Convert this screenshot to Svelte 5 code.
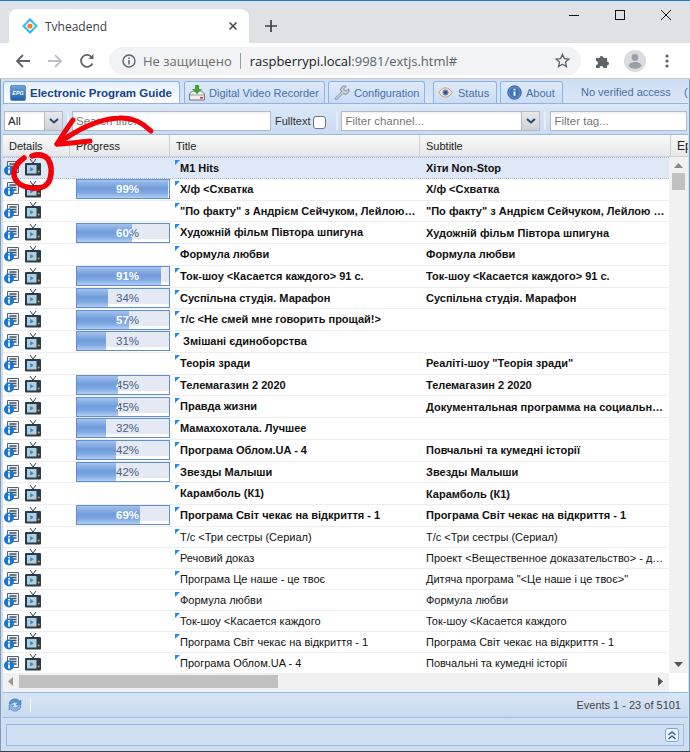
<script>
  const rows = [
    { title: "M1 Hits", sub: "Хіти Non-Stop", bold: true, sel: true },
    { title: "Х/ф <Схватка", sub: "Х/ф <Схватка", pct: 99, bold: true },
    { title: '"По факту" з Андрієм Сейчуком, Лейлою…', sub: '"По факту" з Андрієм Сейчуком, Лейлою …', bold: true },
    { title: "Художній фільм Півтора шпигуна", sub: "Художній фільм Півтора шпигуна", pct: 60, bold: true },
    { title: "Формула любви", sub: "Формула любви", bold: true },
    { title: "Ток-шоу <Касается каждого> 91 с.", sub: "Ток-шоу <Касается каждого> 91 с.", pct: 91, bold: true },
    { title: "Суспільна студія. Марафон", sub: "Суспільна студія. Марафон", pct: 34, bold: true },
    { title: "т/с <Не смей мне говорить прощай!>", sub: "", pct: 57, bold: true },
    { title: " Змішані єдиноборства", sub: "", pct: 31, bold: true },
    { title: "Теорія зради", sub: 'Реаліті-шоу "Теорія зради"', bold: true },
    { title: "Телемагазин 2 2020", sub: "Телемагазин 2 2020", pct: 45, bold: true },
    { title: "Правда жизни", sub: "Документальная программа на социальн…", pct: 45, bold: true },
    { title: "Мамахохотала. Лучшее", sub: "", pct: 32, bold: true },
    { title: "Програма Облом.UA - 4", sub: "Повчальні та кумедні історії", pct: 42, bold: true },
    { title: "Звезды Малыши", sub: "Звезды Малыши", pct: 42, bold: true },
    { title: "Карамболь (К1)", sub: "Карамболь (К1)", bold: true },
    { title: "Програма Світ чекає на відкриття - 1", sub: "Програма Світ чекає на відкриття - 1", pct: 69, bold: true },
    { title: "Т/с <Три сестры (Сериал)", sub: "Т/с <Три сестры (Сериал)" },
    { title: "Речовий доказ", sub: "Проект <Вещественное доказательство> - д…" },
    { title: "Програма Це наше - це твоє", sub: 'Дитяча програма "<Це наше і це твоє>"' },
    { title: "Формула любви", sub: "Формула любви" },
    { title: "Ток-шоу <Касается каждого", sub: "Ток-шоу <Касается каждого" },
    { title: "Програма Світ чекає на відкриття - 1", sub: "Програма Світ чекає на відкриття - 1" },
    { title: "Програма Облом.UA - 4", sub: "Повчальні та кумедні історії" },
  ];
</script>

<div class="window">
  <div class="tabstrip">
    <div class="tab">
      <svg class="favicon" width="18" height="18" viewBox="0 0 18 18">
        <path d="M9 1l4 4-1.500 1.500L9 4 6.500 6.500 5 5z" fill="#29b6f6" />
        <path d="M9 17l4-4-1.500-1.500L9 14l-2.500-2.500L5 13z" fill="#29b6f6" />
        <path d="M1 9l4-4 1.500 1.500L4 9l2.500 2.500L5 13z" fill="#29c5f6" />
        <path d="M17 9l-4-4-1.500 1.500L14 9l-2.500 2.500L13 13z" fill="#29c5f6" />
        <circle cx="9" cy="9" r="2.600" fill="#ff7a1a" />
      </svg>
      <span class="tab-title">Tvheadend</span>
      <svg width="10" height="10" viewBox="0 0 10 10"><path d="M1.500 1.500l7 7M8.500 1.500l-7 7" stroke="#45494d" stroke-width="1.600" /></svg>
    </div>
    <svg class="plus" width="12" height="12" viewBox="0 0 12 12"><path d="M6 0v12M0 6h12" stroke="#3c4043" stroke-width="1.700" /></svg>
    <div class="winctl">
      <svg width="12" height="12" viewBox="0 0 12 12"><path d="M1 6.500h10" stroke="#111" /></svg>
      <svg width="12" height="12" viewBox="0 0 12 12"><rect x="1.500" y="1.500" width="9" height="9" fill="none" stroke="#111" /></svg>
      <svg width="12" height="12" viewBox="0 0 12 12"><path d="M1 1l10 10M11 1L1 11" stroke="#111" /></svg>
    </div>
  </div>

  <div class="toolbar">
    <svg class="nav" width="16" height="16" viewBox="0 0 16 16"><path d="M15 8H2M8 2L2 8l6 6" fill="none" stroke="#5f6368" stroke-width="1.800" /></svg>
    <svg class="nav" width="16" height="16" viewBox="0 0 16 16"><path d="M1 8h13M8 2l6 6-6 6" fill="none" stroke="#bdc1c6" stroke-width="1.800" /></svg>
    <svg class="nav" width="16" height="16" viewBox="0 0 16 16"><path d="M13.500 10.500A6 6 0 1 1 13 4.500" fill="none" stroke="#5f6368" stroke-width="1.800" /><path d="M14.500 1v5h-5z" fill="#5f6368" /></svg>
    <div class="omnibox">
      <svg width="14" height="14" viewBox="0 0 14 14"><circle cx="7" cy="7" r="6" fill="none" stroke="#5f6368" stroke-width="1.400" /><path d="M7 6v4.500M7 3.500v1.400" stroke="#5f6368" stroke-width="1.500" /></svg>
      <span class="insecure">Не защищено</span>
      <span class="bar"></span>
      <span class="url">raspberrypi.local<span class="dim">:9981/extjs.html#</span></span>
      <svg class="star" width="15" height="15" viewBox="0 0 16 16"><path d="M8 1.500l2 4.500 4.800.5-3.600 3.200 1 4.800L8 12l-4.200 2.500 1-4.800L1.200 6.500 6 6z" fill="none" stroke="#5f6368" stroke-width="1.400" /></svg>
    </div>
    <svg class="puzzle" width="16" height="16" viewBox="0 0 16 16"><path d="M1 5h3.500a2 2 0 1 1 4 0H12v3.500a2 2 0 1 1 0 4V15H8.500a2 2 0 1 0-4 0H1v-3a2 2 0 1 0 0-4z" fill="#5f6368" /></svg>
    <svg class="avatar" width="22" height="22" viewBox="0 0 22 22"><circle cx="11" cy="11" r="11" fill="#dadce0" /><circle cx="11" cy="7.500" r="3.400" fill="#9aa0a6" /><path d="M4.500 16c1-3.200 3.500-4 6.500-4s5.500.8 6.500 4c-1.500 1.800-4 2.800-6.500 2.800S6 17.800 4.500 16z" fill="#9aa0a6" /></svg>
    <svg class="dots" width="4" height="14" viewBox="0 0 4 14"><circle cx="2" cy="2" r="1.600" fill="#5f6368" /><circle cx="2" cy="7" r="1.600" fill="#5f6368" /><circle cx="2" cy="12" r="1.600" fill="#5f6368" /></svg>
  </div>

  <div class="app">
    <div class="ext-tabs">
      <div class="ext-tab active epg">
        <svg width="16" height="16" viewBox="0 0 18 18"><defs><linearGradient id="e" x1="0" y1="0" x2="0" y2="1"><stop offset="0" stop-color="#6fa5dc" /><stop offset="1" stop-color="#1d5ea5" /></linearGradient></defs><rect x=".5" y=".5" width="17" height="17" rx="2" fill="url(#e)" stroke="#4f86c0" /><text x="9" y="11.500" text-anchor="middle" font-size="6" font-weight="700" font-style="italic" fill="#fff" font-family="Liberation Sans">EPG</text></svg>
        <span>Electronic Program Guide</span>
      </div>
      <div class="ext-tab dvr">
        <svg width="18" height="18" viewBox="0 0 18 18"><path d="M1.500 10l3-3h9l3 3v6h-15z" fill="#eee" stroke="#777" /><path d="M1.500 11h15" stroke="#999" /><rect x="12" y="13" width="3" height="1.500" fill="#e22" /><path d="M7 1h4v4h3l-5 5-5-5h3z" fill="#3fa535" /></svg>
        <span>Digital Video Recorder</span>
      </div>
      <div class="ext-tab conf">
        <svg width="17" height="17" viewBox="0 0 18 18"><path d="M2 15.500L9 8.500a4 4 0 0 1 5-6l-2.500 2.500.5 2 2 .5L16.500 5a4 4 0 0 1-6 5l-7 7z" fill="#c9d3de" stroke="#7f8a96" /></svg>
        <span>Configuration</span>
      </div>
      <div class="ext-tab stat">
        <svg width="15" height="13" viewBox="0 0 18 14"><path d="M1 7c2.500-4 5-5.500 8-5.500S14.500 3 17 7c-2.500 4-5 5.500-8 5.500S3.500 11 1 7z" fill="#f4e4d4" stroke="#c98a5a" /><circle cx="9" cy="7" r="3.600" fill="#4f86c8" /><circle cx="9" cy="7" r="1.500" fill="#17365f" /></svg>
        <span>Status</span>
      </div>
      <div class="ext-tab about">
        <svg width="15" height="15" viewBox="0 0 16 16"><circle cx="8" cy="8" r="7.200" fill="#5b8ac8" stroke="#2f5f9f" /><circle cx="8" cy="8" r="5.200" fill="#3f74b8" /><path d="M8 7v4.500M8 4v1.600" stroke="#fff" stroke-width="2" /></svg>
        <span>About</span>
      </div>
      <span class="access">No verified access</span>
      <span class="paren">(</span>
    </div>

    <div class="filters">
      <div class="combo all"><span class="val">All</span><span class="trigger"><svg width="10" height="6" viewBox="0 0 10 6"><path d="M1 1l4 3.500L9 1" fill="none" stroke="#26477a" stroke-width="2" /></svg></span></div>
      <span class="sep"></span>
      <div class="field search">Search title...</div>
      <span class="lbl">Fulltext</span>
      <span class="check"></span>
      <span class="sep"></span>
      <div class="combo channel"><span class="val">Filter channel...</span><span class="trigger"><svg width="10" height="6" viewBox="0 0 10 6"><path d="M1 1l4 3.500L9 1" fill="none" stroke="#26477a" stroke-width="2" /></svg></span></div>
      <span class="sep"></span>
      <div class="field tag">Filter tag...</div>
    </div>

    <div class="grid">
      <div class="head">
        <div class="hcell c-details">Details</div>
        <div class="hcell c-progress">Progress</div>
        <div class="hcell c-title">Title</div>
        <div class="hcell c-sub">Subtitle</div>
        <div class="hcell c-ep">Ep</div>
      </div>
      <div class="middle">
        <div class="body">
          {#each rows as r}
            <div class="row" class:bold={r.bold} class:sel={r.sel}>
              <div class="cell c-details icons">
                <svg width="15" height="16" viewBox="0 0 15 16">
                  <path d="M3.500 1.500h11v11h-11z" fill="#eef1f4" stroke="#56626e" />
                  <path d="M5.500 4h7M5.500 6.500h7M9 9h3.500" stroke="#46525f" stroke-width="1.300" />
                  <circle cx="5" cy="10.500" r="5" fill="#1b76d2" />
                  <path d="M5 9.500v4M5 7v1.400" stroke="#fff" stroke-width="1.800" />
                </svg>
                <svg width="16" height="17" viewBox="0 0 16 17">
                  <path d="M5 0l3 4 3-4" fill="none" stroke="#33424f" />
                  <rect x="0" y="4" width="16" height="12.500" rx="1" fill="#2a3c49" />
                  <rect x="2" y="6" width="9.500" height="8.500" fill="#b5cddd" />
                  <path d="M5.200 8l3.600 2.200-3.600 2.200z" fill="#2490d8" />
                  <circle cx="13.700" cy="12.500" r="1" fill="#e8a020" />
                </svg>
              </div>
              <div class="cell c-progress">
                {#if r.pct}
                  <div class="pbar">
                    <span class="ptext back">{r.pct}%</span>
                    <div class="pfill" style="width: {r.pct}%"><span class="ptext front">{r.pct}%</span></div>
                  </div>
                {/if}
              </div>
              <div class="cell c-title dirty">{r.title}</div>
              <div class="cell c-sub">{r.sub}</div>
            </div>
          {/each}
        </div>
        <div class="vscroll">
          <svg width="9" height="5" viewBox="0 0 9 5"><path d="M4.500 0L9 5H0z" fill="#888" /></svg>
          <span class="vthumb"></span>
          <svg class="vdown" width="9" height="5" viewBox="0 0 9 5"><path d="M4.500 5L9 0H0z" fill="#555" /></svg>
        </div>
      </div>
      <div class="hscroll">
        <svg width="5" height="9" viewBox="0 0 5 9"><path d="M0 4.500L5 0v9z" fill="#999" /></svg>
        <span class="hthumb"></span>
        <svg class="hright" width="5" height="9" viewBox="0 0 5 9"><path d="M5 4.500L0 0v9z" fill="#555" /></svg>
      </div>
    </div>

    <div class="paging">
      <svg width="16" height="16" viewBox="0 0 16 16"><path d="M2 7a6 6 0 0 1 10.500-3l1.500-1v5h-5l1.700-1.500A3.800 3.800 0 0 0 4.500 7z" fill="#5c94d6" stroke="#2f6db5" stroke-width=".5" /><path d="M14 9a6 6 0 0 1-10.500 3L2 13V8h5l-1.700 1.500A3.800 3.800 0 0 0 11.500 9z" fill="#8ab8ea" stroke="#2f6db5" stroke-width=".5" /></svg>
      <span class="psep"></span>
      <span class="events">Events 1 - 23 of 5101</span>
    </div>
    <div class="collapsed">
      <span class="tool"><svg width="10" height="10" viewBox="0 0 10 10"><path d="M1.500 5l3.500-3 3.500 3M1.500 9l3.500-3 3.500 3" fill="none" stroke="#2d5f9e" stroke-width="1.500" /></svg></span>
    </div>
  </div>

  <svg class="scribble" width="690" height="752" viewBox="0 0 690 752">
    <g fill="none" stroke="#f40009" stroke-linecap="round" stroke-linejoin="round">
      <path d="M151 130c-8-8-18-14-32-13-22 1-42 12-62 26" stroke-width="5" />
      <path d="M73 119c-6 8-11 16-16 24 10 0 22-2 33-3" stroke-width="5" />
      <path d="M24 157c-6 4-10 10-10 16 0 8 8 13 18 14 9 1 16-2 18-9 2-7 1-15-2-20-4-4-10-5-16-3" stroke-width="5.500" />
    </g>
  </svg>
</div>

<style>
  :global(body) {
    margin: 0;
    background: #fff;
  }

  .window {
    position: relative;
    width: 690px;
    height: 752px;
    display: flex;
    flex-direction: column;
    overflow: hidden;
    box-sizing: border-box;
    border-top: 1px solid #1a7fd0;
    border-bottom: 1px solid #33424f;
    font-family: "Liberation Sans", Arial, sans-serif;
    background: #cfdef1;
  }

  .tabstrip {
    height: 42px;
    flex: none;
    background: #dee1e6;
    display: flex;
    align-items: flex-end;
    padding-left: 9px;
    box-sizing: border-box;
    position: relative;
  }

  .tab {
    width: 240px;
    height: 34px;
    box-sizing: border-box;
    background: #fff;
    border-radius: 8px 8px 0 0;
    display: flex;
    align-items: center;
    padding: 0 11px 0 12px;
    font-family: "Open Sans", "Noto Sans", sans-serif;
    font-size: 12px;
    color: #3c4043;
  }

  .favicon {
    margin-right: 6px;
  }

  .tab-title {
    flex: 1;
  }

  .plus {
    margin: 0 0 11px 16px;
  }

  .winctl {
    margin: 0 0 22px auto;
    display: flex;
    gap: 34px;
    padding-right: 18px;
  }

  .toolbar {
    height: 36px;
    flex: none;
    background: #fff;
    display: flex;
    align-items: center;
    box-sizing: border-box;
    border-bottom: 1px solid #c6c8cb;
    padding-left: 15px;
  }

  .nav {
    margin-right: 16px;
  }

  .omnibox {
    width: 472px;
    height: 28px;
    margin-left: -2px;
    border-radius: 14px;
    background: #f1f3f4;
    display: flex;
    align-items: center;
    padding: 0 11px 0 13px;
    box-sizing: border-box;
    font-family: "Open Sans", "Noto Sans", sans-serif;
    font-size: 13px;
  }

  .insecure {
    color: #6f6a66;
    margin-left: 7px;
  }

  .bar {
    width: 1px;
    height: 16px;
    background: #9a9da0;
    margin: 0 9px 0 8px;
  }

  .url {
    color: #202124;
  }

  .dim {
    color: #5f6368;
  }

  .star {
    margin-left: auto;
  }

  .puzzle {
    margin-left: 14px;
  }

  .avatar {
    margin-left: 13px;
  }

  .dots {
    margin-left: 19px;
  }

  .app {
    flex: 1;
    min-height: 0;
    display: flex;
    flex-direction: column;
    border-left: 1px solid #7f9db9;
    border-right: 1px solid #7f9db9;
    padding: 2px 1px 0 2px;
    background: #cfdef1;
    overflow: hidden;
  }

  .ext-tabs {
    height: 23px;
    flex: none;
    display: flex;
    align-items: flex-end;
    gap: 3px;
    box-sizing: border-box;
    border-bottom: 1px solid #8db2e3;
    background: linear-gradient(#cfdff5, #dbe6f6);
    font-size: 11px;
    color: #456fa8;
    white-space: nowrap;
    overflow: hidden;
  }

  .ext-tab {
    height: 22px;
    box-sizing: border-box;
    flex: none;
    display: flex;
    align-items: center;
    gap: 4px;
    padding: 0 0 0 4px;
    border: 1px solid #8db2e3;
    border-bottom: none;
    border-radius: 3px 3px 0 0;
    background: linear-gradient(#dfeafa, #cbdcf4);
  }

  .ext-tab svg {
    flex: none;
  }

  .ext-tab.active {
    background: linear-gradient(#e6f0fc, #fff);
    font-weight: 700;
    font-size: 11.500px;
    color: #15428b;
    height: 23px;
    margin-bottom: -1px;
  }

  .epg {
    width: 177px;
    padding-left: 6px;
  }

  .dvr {
    width: 141px;
    margin-left: 1px;
    padding-left: 3px;
    gap: 3px;
  }

  .conf {
    width: 97px;
  }

  .stat {
    width: 64px;
    margin-left: 5px;
    gap: 5px;
  }

  .about {
    width: 63px;
    padding-left: 6px;
  }

  .access {
    margin-left: 15px;
    line-height: 22px;
  }

  .paren {
    margin-left: 10px;
    line-height: 22px;
  }

  .filters {
    height: 31px;
    flex: none;
    box-sizing: border-box;
    display: flex;
    align-items: center;
    padding: 3px 0 0 1px;
    background: linear-gradient(#dbe7f7, #cadcf2);
    border-bottom: 1px solid #99bbe8;
    font-size: 11.500px;
    color: #333;
    white-space: nowrap;
  }

  .field,
  .combo {
    height: 20px;
    box-sizing: border-box;
    background: linear-gradient(#eee 0, #fff 3px);
    border: 1px solid #b5b8c8;
    display: flex;
    align-items: center;
    flex: none;
  }

  .field {
    padding-left: 3px;
    color: #777;
  }

  .val {
    flex: 1;
    padding-left: 3px;
    color: #777;
  }

  .all .val {
    color: #222;
  }

  .trigger {
    width: 17px;
    height: 18px;
    display: flex;
    align-items: center;
    justify-content: center;
    background: linear-gradient(#e8e9ea, #cfd1d3);
    border-left: 1px solid #b5b8c8;
  }

  .all {
    width: 59px;
  }

  .search {
    width: 199px;
    margin-left: -1px;
  }

  .channel {
    width: 199px;
    margin-left: -1px;
  }

  .tag {
    width: 137px;
  }

  .sep {
    width: 2px;
    height: 18px;
    background: #e4edf9;
    margin: 0 4px;
    flex: none;
  }

  .lbl {
    margin-left: 4px;
    font-size: 11px;
  }

  .check {
    width: 11px;
    height: 11px;
    margin: 3px 6px 0 3px;
    border: 1px solid #777;
    border-radius: 3px;
    background: #fff;
    flex: none;
  }

  .grid {
    flex: 1;
    min-height: 0;
    display: flex;
    flex-direction: column;
    background: #fff;
    overflow: hidden;
  }

  .head {
    height: 22px;
    flex: none;
    display: flex;
    box-sizing: border-box;
    background: linear-gradient(#fafafa, #e6e7e9);
    border-bottom: 1px solid #d0d0d0;
    font-size: 11px;
    color: #222;
  }

  .hcell {
    box-sizing: border-box;
    line-height: 22px;
    padding-left: 6px;
    border-right: 1px solid #d0d0d0;
    flex: none;
  }

  .c-details {
    width: 67px;
  }

  .c-progress {
    width: 100px;
  }

  .c-title {
    width: 250px;
  }

  .c-sub {
    width: 251px;
  }

  .c-ep {
    flex: 1;
    border-right: none;
    font-size: 12px;
  }

  .middle {
    flex: 1;
    min-height: 0;
    display: flex;
    overflow: hidden;
  }

  .body {
    flex: 1;
    min-width: 0;
    overflow: hidden;
  }

  .row {
    height: 21px;
    box-sizing: border-box;
    display: flex;
    align-items: center;
    border-bottom: 1px solid #ededed;
    color: #111;
    white-space: pre;
  }

  .row.bold {
    height: 21.750px;
    font-weight: 700;
  }

  .row.sel {
    background: #dfe8f6;
    border-top: 1px dotted #a3bae9;
    border-bottom: 1px dotted #a3bae9;
  }

  .cell {
    box-sizing: border-box;
    flex: none;
    overflow: hidden;
    padding-left: 6px;
    font-size: 11px;
  }

  .icons {
    display: flex;
    align-items: center;
    gap: 6px;
    padding-left: 1px;
  }

  .icons svg {
    flex: none;
  }

  .dirty {
    position: relative;
    padding-left: 10px;
    height: 100%;
    line-height: 20px;
  }

  .dirty::before {
    content: "";
    position: absolute;
    left: 5px;
    top: 2px;
    border-top: 5px solid #1a8cff;
    border-right: 5px solid transparent;
  }

  .pbar {
    position: relative;
    width: 94px;
    height: 20px;
    box-sizing: border-box;
    border: 1px solid #5f8fd3;
    background: linear-gradient(#e4e9f3 85%, #fff 85%);
    overflow: hidden;
    text-align: center;
  }

  .pfill {
    position: absolute;
    left: 0;
    top: 0;
    bottom: 0;
    overflow: hidden;
    background: linear-gradient(#a4c2ec, #6f9cdc 45%, #7ea8e2 70%, #b4cdf0);
  }

  .ptext {
    position: absolute;
    left: 0;
    top: 0;
    width: 92px;
    box-sizing: border-box;
    padding-left: 9px;
    line-height: 18px;
    font-size: 11.500px;
    font-weight: 400;
  }

  .back {
    color: #4a5f88;
  }

  .front {
    color: #fff;
    font-weight: 700;
  }

  .vscroll {
    width: 19px;
    flex: none;
    background: #f1f1f1;
    display: flex;
    flex-direction: column;
    align-items: center;
    padding-top: 6px;
    box-sizing: border-box;
  }

  .vthumb {
    width: 13px;
    height: 17px;
    margin-top: 5px;
    background: #c1c1c1;
  }

  .vdown {
    margin-top: auto;
    margin-bottom: 6px;
  }

  .hscroll {
    height: 19px;
    flex: none;
    box-sizing: border-box;
    margin-right: 19px;
    background: #f1f1f1;
    display: flex;
    align-items: center;
    padding: 0 6px 3px 5px;
  }

  .hthumb {
    width: 259px;
    height: 13px;
    margin-left: 6px;
    background: #c1c1c1;
  }

  .hright {
    margin-left: auto;
  }

  .paging {
    height: 26px;
    flex: none;
    box-sizing: border-box;
    display: flex;
    align-items: center;
    padding: 0 7px 0 4px;
    border-top: 1px solid #99bbe8;
    border-bottom: 1px solid #99bbe8;
    background: linear-gradient(#d9e5f5, #c9daf0);
    font-size: 11px;
    color: #444;
  }

  .psep {
    width: 1px;
    height: 13px;
    margin-left: 7px;
    background: #fff;
  }

  .events {
    margin-left: auto;
  }

  .collapsed {
    height: 22px;
    flex: none;
    margin: 6px 4px 5px 3px;
    box-sizing: border-box;
    border: 1px solid #99bbe8;
    background: #d0dff2;
    display: flex;
    align-items: center;
    justify-content: flex-end;
    padding-right: 4px;
  }

  .tool {
    width: 14px;
    height: 14px;
    box-sizing: border-box;
    border: 1px solid #7ea6dc;
    border-radius: 3px;
    background: #eef4fc;
    display: flex;
    align-items: center;
    justify-content: center;
  }

  .scribble {
    position: absolute;
    left: 0;
    top: 0;
    pointer-events: none;
  }
</style>
